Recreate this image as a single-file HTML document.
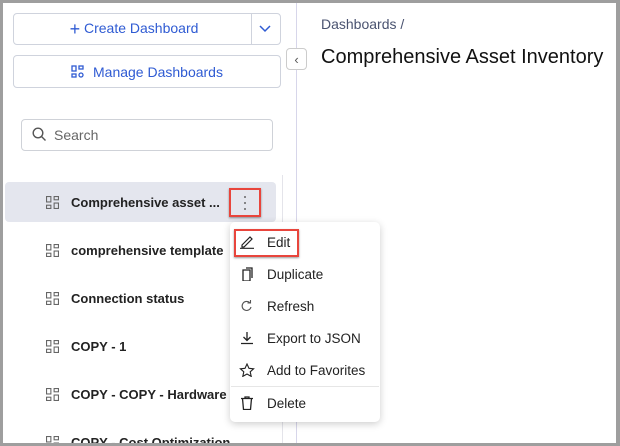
<!DOCTYPE html>
<html><head><style>
*{box-sizing:border-box;margin:0;padding:0}
body{width:620px;height:446px;background:#9e9e9e;font-family:"Liberation Sans",sans-serif;position:relative;overflow:hidden}
.page{position:absolute;left:3px;top:3px;width:613px;height:440px;background:#fff;overflow:hidden}
.a{position:absolute}
.btn{position:absolute;border:1px solid #cfd3dd;border-radius:4px;color:#2f5bd3;font-size:14px;display:flex;align-items:center;justify-content:center;background:#fff}
.row{position:absolute;left:43px;font-size:13px;font-weight:bold;color:#222;display:flex;align-items:center;height:20px}
.gi{width:13px;height:13px;margin-right:12px;display:inline-block}
.mi{position:absolute;left:236px;font-size:13.5px;color:#222;display:flex;align-items:center;height:20px}
.mi svg{margin-right:12px}
</style></head><body><div class="page">
<div class="btn" style="left:10px;top:10px;width:268px;height:32px"><span style="margin-right:26px"><span style="font-size:18px;vertical-align:-2px">+</span> Create Dashboard</span></div>
<div class="a" style="left:248px;top:11px;width:1px;height:30px;background:#cfd3dd"></div>
<svg class="a" style="left:256px;top:22px" width="12" height="8" viewBox="0 0 12 8"><path d="M1 1l5 5 5-5" stroke="#2f5bd3" stroke-width="1.5" fill="none"/></svg>
<div class="btn" style="left:10px;top:52px;width:268px;height:33px"><svg width="16" height="14" viewBox="0 0 16 14" style="margin-right:6px"><g stroke="#2f5bd3" stroke-width="1.3" fill="none"><rect x="1" y="1" width="4" height="5"/><rect x="8" y="1" width="4" height="3"/><rect x="1" y="9" width="4" height="3"/><circle cx="10" cy="10" r="2"/></g></svg>Manage Dashboards</div>
<div class="a" style="left:293px;top:0;width:1px;height:440px;background:#d7d6ea"></div>
<div class="a" style="left:279px;top:172px;width:1px;height:270px;background:#e4e4ea"></div>
<div class="btn" style="left:283px;top:45px;width:21px;height:22px;color:#555;font-size:13px;border-color:#ccc">&lsaquo;</div>
<div class="a" style="left:318px;top:13px;font-size:14px;color:#4a5370">Dashboards /</div>
<div class="a" style="left:318px;top:43px;font-size:20px;color:#111">Comprehensive Asset Inventory</div>
<div class="a" style="left:18px;top:116px;width:252px;height:32px;border:1px solid #cfd2d8;border-radius:4px"></div>
<svg class="a" style="left:29px;top:124px" width="15" height="15" viewBox="0 0 15 15"><circle cx="6" cy="6" r="4.8" stroke="#555" stroke-width="1.4" fill="none"/><path d="M9.5 9.5l4 4" stroke="#555" stroke-width="1.4"/></svg>
<div class="a" style="left:51px;top:124px;font-size:14px;color:#666">Search</div>
<div class="a" style="left:2px;top:179px;width:271px;height:40px;background:#e4e6ee;border-radius:4px"></div>
<div class="row" style="top:189px"><svg class="gi" viewBox="0 0 12 12"><g stroke="#666" fill="none"><rect x=".5" y=".5" width="4" height="5"/><rect x="7.5" y=".5" width="4" height="3"/><rect x=".5" y="8.5" width="4" height="3"/><rect x="7.5" y="6.5" width="4" height="5"/></g></svg>Comprehensive asset ...</div>
<div class="a" style="left:226px;top:185px;width:32px;height:29px;border:2px solid #e8453c;box-shadow:0 1px 2px rgba(0,0,0,.4)"></div>
<svg class="a" style="left:240px;top:192px" width="4" height="16" viewBox="0 0 4 16"><circle cx="2" cy="2" r="1" fill="#666"/><circle cx="2" cy="8" r="1" fill="#666"/><circle cx="2" cy="14" r="1" fill="#666"/></svg>
<div class="row" style="top:237px"><svg class="gi" viewBox="0 0 12 12"><g stroke="#666" fill="none"><rect x=".5" y=".5" width="4" height="5"/><rect x="7.5" y=".5" width="4" height="3"/><rect x=".5" y="8.5" width="4" height="3"/><rect x="7.5" y="6.5" width="4" height="5"/></g></svg>comprehensive template</div>
<div class="row" style="top:285px"><svg class="gi" viewBox="0 0 12 12"><g stroke="#666" fill="none"><rect x=".5" y=".5" width="4" height="5"/><rect x="7.5" y=".5" width="4" height="3"/><rect x=".5" y="8.5" width="4" height="3"/><rect x="7.5" y="6.5" width="4" height="5"/></g></svg>Connection status</div>
<div class="row" style="top:333px"><svg class="gi" viewBox="0 0 12 12"><g stroke="#666" fill="none"><rect x=".5" y=".5" width="4" height="5"/><rect x="7.5" y=".5" width="4" height="3"/><rect x=".5" y="8.5" width="4" height="3"/><rect x="7.5" y="6.5" width="4" height="5"/></g></svg>COPY - 1</div>
<div class="row" style="top:381px"><svg class="gi" viewBox="0 0 12 12"><g stroke="#666" fill="none"><rect x=".5" y=".5" width="4" height="5"/><rect x="7.5" y=".5" width="4" height="3"/><rect x=".5" y="8.5" width="4" height="3"/><rect x="7.5" y="6.5" width="4" height="5"/></g></svg>COPY - COPY - Hardware</div>
<div class="row" style="top:429px"><svg class="gi" viewBox="0 0 12 12"><g stroke="#666" fill="none"><rect x=".5" y=".5" width="4" height="5"/><rect x="7.5" y=".5" width="4" height="3"/><rect x=".5" y="8.5" width="4" height="3"/><rect x="7.5" y="6.5" width="4" height="5"/></g></svg>COPY - Cost Optimization</div>
<div class="a" style="left:227px;top:219px;width:150px;height:200px;background:#fff;border-radius:5px;box-shadow:0 2px 8px rgba(0,0,0,.2)"></div>
<div class="a" style="left:231px;top:226px;width:65px;height:28px;border:2px solid #e8453c;box-shadow:0 1px 2px rgba(0,0,0,.4)"></div>
<div class="mi" style="top:229px"><svg width="16" height="14" viewBox="0 0 16 14"><path d="M3 10l8-8 2 2-8 8H3z M1 13.3h14" stroke="#222" stroke-width="1.2" fill="none"/></svg>Edit</div>
<div class="mi" style="top:261px"><svg width="16" height="14" viewBox="0 0 16 14"><path d="M4 3h7v11H4z M7 1h6v10" stroke="#222" stroke-width="1.3" fill="none"/></svg>Duplicate</div>
<div class="mi" style="top:293px"><svg width="16" height="14" viewBox="0 0 16 14"><path d="M12 8a4.5 4.5 0 1 1-1-4 M11.5 1v3h-3" stroke="#555" stroke-width="1.1" fill="none"/></svg>Refresh</div>
<div class="mi" style="top:325px"><svg width="16" height="14" viewBox="0 0 16 14"><path d="M8 1v8 M4.5 6L8 9.5 11.5 6 M2 12.5h12" stroke="#222" stroke-width="1.3" fill="none"/></svg>Export to JSON</div>
<div class="mi" style="top:357px"><svg width="16" height="14" viewBox="0 0 16 14"><path d="M8 1l2 4.3 4.6.5-3.4 3 1 4.6L8 11 3.8 13.4l1-4.6-3.4-3L6 5.3z" stroke="#222" stroke-width="1.1" fill="none"/></svg>Add to Favorites</div>
<div class="a" style="left:228px;top:383px;width:148px;height:1px;background:#e6e6e6"></div>
<div class="mi" style="top:390px"><svg width="16" height="14" viewBox="0 0 16 14"><path d="M2 2.5h12 M6 2.5V1h4v1.5 M3.5 2.5l1 11h7l1-11" stroke="#222" stroke-width="1.3" fill="none"/></svg>Delete</div>
</div></body></html>
